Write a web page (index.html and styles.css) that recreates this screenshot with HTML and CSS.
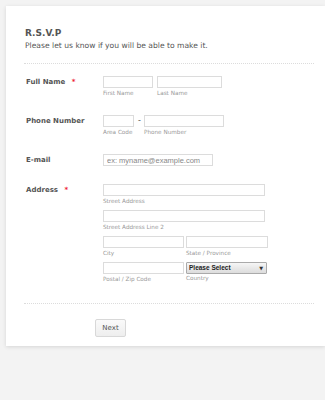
FILE: index.html
```html
<!DOCTYPE html>
<html lang="en">
<head>
    <meta charset="UTF-8">
    <meta name="viewport" content="width=device-width, initial-scale=1.0">
    <title>R.S.V.P</title>
    <link rel="stylesheet" href="styles.css">
</head>
<body>
    <div class="form-card">
        <div class="form-header">
            <h2>R.S.V.P</h2>
            <p>Please let us know if you will be able to make it.</p>
        </div>

        <form class="form-body" onsubmit="event.preventDefault()">
            <!-- Full name -->
            <div class="field">
                <label class="field-label">Full Name <span class="required">*</span></label>
                <div class="field-inputs">
                    <div class="sub">
                        <input type="text" class="w-first">
                        <span class="sublabel">First Name</span>
                    </div>
                    <div class="sub">
                        <input type="text" class="w-last">
                        <span class="sublabel">Last Name</span>
                    </div>
                </div>
            </div>

            <!-- Phone -->
            <div class="field">
                <label class="field-label">Phone Number</label>
                <div class="field-inputs">
                    <div class="sub">
                        <input type="tel" class="w-area">
                        <span class="sublabel">Area Code</span>
                    </div>
                    <span class="dash">-</span>
                    <div class="sub">
                        <input type="tel" class="w-phone">
                        <span class="sublabel">Phone Number</span>
                    </div>
                </div>
            </div>

            <!-- Email -->
            <div class="field field-email">
                <label class="field-label">E-mail</label>
                <div class="field-inputs">
                    <input type="email" class="w-email" placeholder="ex: myname@example.com">
                </div>
            </div>

            <!-- Address -->
            <div class="field field-address">
                <label class="field-label">Address <span class="required">*</span></label>
                <div class="address">
                    <div class="sub full">
                        <input type="text">
                        <span class="sublabel">Street Address</span>
                    </div>
                    <div class="sub full">
                        <input type="text">
                        <span class="sublabel">Street Address Line 2</span>
                    </div>
                    <div class="sub">
                        <input type="text">
                        <span class="sublabel">City</span>
                    </div>
                    <div class="sub">
                        <input type="text">
                        <span class="sublabel">State / Province</span>
                    </div>
                    <div class="sub">
                        <input type="text">
                        <span class="sublabel">Postal / Zip Code</span>
                    </div>
                    <div class="sub">
                        <div class="select-wrap">
                            <select>
                                <option>Please Select</option>
                            </select>
                        </div>
                        <span class="sublabel country">Country</span>
                    </div>
                </div>
            </div>

            <div class="form-footer">
                <button type="submit">Next</button>
            </div>
        </form>
    </div>
</body>
</html>
```

FILE: styles.css
```css
* {
    margin: 0;
    padding: 0;
    box-sizing: border-box;
}

body {
    font-family: 'DejaVu Sans', Verdana, sans-serif;
    background-color: #f3f3f3;
    padding: 6px 0 0 6px;
    overflow: hidden;
    height: 400px;
}

.form-card {
    background: #fff;
    width: 319px;
    height: 340px;
    box-shadow: 0 1px 4px rgba(0, 0, 0, 0.12);
    padding: 0 0 0 18px;
}

.form-header {
    width: 290px;
    padding: 21px 0 11px 1px;
    border-bottom: 1px dotted #dcdcdc;
}

.form-header h2 {
    font-size: 9px;
    font-weight: bold;
    color: #555;
    line-height: 12px;
}

.form-header p {
    font-size: 7.6px;
    color: #555;
    line-height: 12px;
    margin-top: 1px;
}

.form-body {
    padding-top: 12px;
}

.field {
    display: flex;
    padding-left: 2px;
    margin-bottom: 17px;
}

.field-email {
    margin-bottom: 18px;
}

.field-address {
    margin-bottom: 19px;
}

.field-label {
    width: 77px;
    flex-shrink: 0;
    font-size: 7px;
    font-weight: bold;
    color: #555;
    line-height: 12px;
}

.required {
    color: #e23;
    margin-left: 4px;
}

.field-inputs {
    display: flex;
    gap: 4px;
}

.sub {
    display: flex;
    flex-direction: column;
}

input,
select {
    display: block;
    height: 12px;
    border: 1px solid #dcdcdc;
    background: #fff;
    font-family: 'Liberation Sans', Arial, sans-serif;
    outline: none;
}

input::placeholder {
    color: #888;
}

.sublabel {
    font-size: 5.7px;
    color: #999;
    line-height: 9px;
    margin-top: 1px;
}

.sublabel.country {
    margin-top: 0;
}

.w-first { width: 50px; }
.w-last { width: 65px; }
.w-area { width: 31px; }
.w-phone { width: 80px; }

.w-email {
    width: 110px;
    font-size: 7.5px;
    padding: 0 3px;
    color: #555;
}

.dash {
    font-size: 8px;
    color: #555;
    line-height: 12px;
    width: 2px;
    text-align: center;
}

.address {
    display: grid;
    grid-template-columns: 81px 82px;
    column-gap: 2px;
    row-gap: 4px;
}

.address .full {
    grid-column: 1 / 3;
}

.address .full input {
    width: 162px;
}

/* country dropdown */
.select-wrap {
    position: relative;
    width: 81px;
    height: 12px;
}

.select-wrap::after {
    content: "\25BC";
    position: absolute;
    right: 4px;
    top: 3px;
    font-size: 5px;
    line-height: 6px;
    color: #333;
    pointer-events: none;
}

select {
    appearance: none;
    -webkit-appearance: none;
    width: 81px;
    padding: 0 0 0 2px;
    font-size: 6.5px;
    font-weight: bold;
    line-height: 10px;
    color: #222;
    border-color: #aaa;
    border-radius: 1px;
    background: linear-gradient(#f6f6f6, #dcdcdc);
}

.form-footer {
    width: 290px;
    border-top: 1px dotted #dcdcdc;
    padding: 11px 0 0 71px;
}

button {
    width: 31px;
    height: 18px;
    font-family: inherit;
    font-size: 7px;
    color: #555;
    background: linear-gradient(#fafafa, #eee);
    border: 1px solid #d8d8d8;
    border-radius: 2px;
    cursor: pointer;
}
```
